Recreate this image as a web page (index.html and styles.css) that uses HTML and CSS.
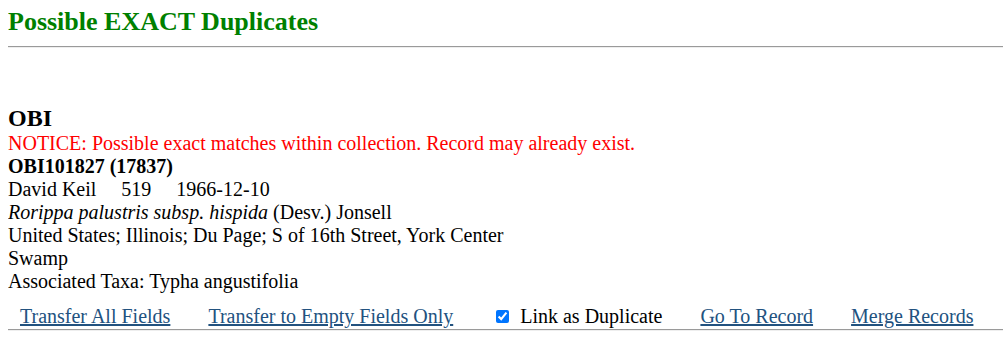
FILE: index.html
```html
<!DOCTYPE html>
<html>
<head>
<meta charset="utf-8">
<link rel="stylesheet" href="styles.css">
</head>
<body>
<h2 class="title">Possible EXACT Duplicates</h2>
<hr class="rule">
<div class="dupe">
  <h3 class="coll">OBI</h3>
  <div class="notice">NOTICE: Possible exact matches within collection. Record may already exist.</div>
  <div class="catnum">OBI101827 (17837)</div>
  <div class="line">David Keil<span class="gap"></span>519<span class="gap"></span>1966-12-10</div>
  <div class="line"><i>Rorippa palustris subsp. hispida</i> (Desv.) Jonsell</div>
  <div class="line">United States; Illinois; Du Page; S of 16th Street, York Center</div>
  <div class="line">Swamp</div>
  <div class="line">Associated Taxa: Typha angustifolia</div>
  <div class="actions">
    <a href="#" class="act">Transfer All Fields</a>
    <a href="#" class="act">Transfer to Empty Fields Only</a>
    <label class="act chk"><input type="checkbox" checked>Link as Duplicate</label>
    <a href="#" class="act">Go To Record</a>
    <a href="#" class="act">Merge Records</a>
  </div>
  <hr class="rule bottom">
</div>
</body>
</html>
```
FILE: styles.css
```css
body {
  margin: 8px 0 8px 8px;
  font-family: "Liberation Serif", "Times New Roman", serif;
  font-size: 20px;
  color: #000;
  background: #fff;
}
.title {
  margin: 0;
  font-size: 26px;
  color: #008000;
  line-height: 28px;
}
.rule {
  margin: 10px 0 0 0;
  border: 0;
  border-top: 1px solid #9a9a9a;
  border-bottom: 1px solid #eeeeee;
  height: 0;
}
.dupe {
  margin-top: 56px;
}
.coll {
  margin: 0;
  font-size: 24px;
  line-height: 28px;
}
.line, .notice, .catnum {
  line-height: 23px;
}
.notice { color: #ff0000; }
.catnum { font-weight: bold; }
.gap {
  display: inline-block;
  width: 25px;
}
.actions {
  display: flex;
  align-items: center;
  gap: 38px;
  padding-left: 12px;
  margin-top: 12px;
  line-height: 23px;
}
.act {
  color: #22527f;
}
.chk {
  color: #000;
  display: flex;
  align-items: center;
  gap: 11px;
  margin-left: 5px;
}
.chk input {
  margin: 0;
  width: 13px;
  height: 13px;
}
.rule.bottom {
  margin-top: 1px;
}
```
